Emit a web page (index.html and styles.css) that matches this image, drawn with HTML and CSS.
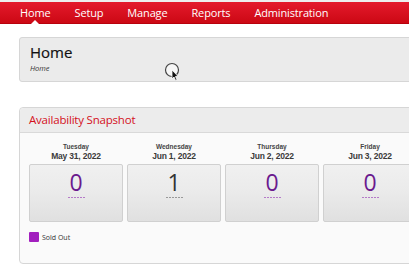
FILE: index.html
```html
<!DOCTYPE html>
<html>
<head>
<meta charset="utf-8">
<link rel="stylesheet" href="styles.css">
</head>
<body>
<div class="topline"></div>
<nav class="nav">
  <a class="nav-item active">Home</a>
  <a class="nav-item">Setup</a>
  <a class="nav-item">Manage</a>
  <a class="nav-item">Reports</a>
  <a class="nav-item">Administration</a>
</nav>
<main class="main">
  <section class="page-head">
    <h1 class="page-title">Home</h1>
    <div class="crumb">Home</div>
  </section>
  <section class="panel">
    <div class="panel-head">Availability Snapshot</div>
    <div class="panel-body">
      <div class="days">
        <div class="day">
          <div class="dow">Tuesday</div>
          <div class="date">May 31, 2022</div>
          <div class="card"><div class="num sold">0</div><div class="dash"></div></div>
        </div>
        <div class="day">
          <div class="dow">Wednesday</div>
          <div class="date">Jun 1, 2022</div>
          <div class="card"><div class="num">1</div><div class="dash gray"></div></div>
        </div>
        <div class="day">
          <div class="dow">Thursday</div>
          <div class="date">Jun 2, 2022</div>
          <div class="card"><div class="num sold">0</div><div class="dash"></div></div>
        </div>
        <div class="day">
          <div class="dow">Friday</div>
          <div class="date">Jun 3, 2022</div>
          <div class="card"><div class="num sold">0</div><div class="dash"></div></div>
        </div>
      </div>
      <div class="legend"><span class="swatch"></span><span class="legend-text">Sold Out</span></div>
    </div>
  </section>
</main>
<svg class="cursor" width="20" height="22" viewBox="0 0 20 22">
  <circle cx="8" cy="8" r="6.5" fill="rgba(255,255,255,0.6)" stroke="#444" stroke-width="1.2"/>
  <path d="M8 8 L8 17 L10 15 L11.6 18.5 L13 17.8 L11.5 14.5 L14 14.3 Z" fill="#111" stroke="#fff" stroke-width="0.8"/>
</svg>
</body>
</html>
```
FILE: styles.css
```css
html, body {
  margin: 0;
  padding: 0;
  background: #fff;
  overflow: hidden;
  width: 409px;
  height: 275px;
}
body {
  font-family: "Open Sans", "DejaVu Sans", sans-serif;
  color: #222;
  position: relative;
}
.topline {
  height: 2px;
  background: #eeeeee;
}
.nav {
  height: 21px;
  display: flex;
  padding-left: 8px;
  background: linear-gradient(#e41a2c, #cc0814);
  border-bottom: 1px solid #b8000c;
}
.nav-item {
  position: relative;
  color: #fff;
  font-size: 11px;
  letter-spacing: -0.15px;
  line-height: 21px;
  padding: 0 12px;
  white-space: nowrap;
}
.nav-item.active::after {
  content: "";
  position: absolute;
  left: 50%;
  bottom: -1px;
  margin-left: -4px;
  border-left: 4px solid transparent;
  border-right: 4px solid transparent;
  border-bottom: 4px solid #fff;
}
.main {
  padding: 13px 0 0 19px;
  width: 520px;
}
.page-head {
  height: 43px;
  background: #ebebeb;
  border: 1px solid #d6d6d6;
  border-radius: 3px;
  padding: 0 10px;
  box-sizing: content-box;
}
.page-title {
  margin: 0;
  padding-top: 4px;
  font-size: 15px;
  font-weight: 400;
  line-height: 20px;
  color: #111;
  -webkit-text-stroke: 0.2px #111;
}
.crumb {
  font-size: 7.5px;
  font-style: italic;
  color: #333;
  line-height: 10px;
  margin-top: 1px;
}
.panel {
  margin-top: 25px;
  border: 1px solid #d6d6d6;
  border-radius: 4px;
  background: #fafafa;
}
.panel-head {
  height: 24px;
  line-height: 24px;
  padding-left: 9px;
  background: #ececec;
  border-bottom: 1px solid #d9d9d9;
  color: #d4101c;
  font-size: 11.5px;
  letter-spacing: -0.2px;
  border-radius: 4px 4px 0 0;
}
.panel-body {
  padding: 9px 9px 21px 9px;
}
.days {
  display: flex;
  gap: 4px;
}
.day {
  width: 94px;
  flex: none;
  text-align: center;
}
.dow {
  font-family: "Liberation Sans", Arial, sans-serif;
  font-weight: 700;
  font-size: 6.5px;
  line-height: 9px;
  color: #444;
}
.date {
  font-family: "Liberation Sans", Arial, sans-serif;
  font-weight: 700;
  font-size: 8.5px;
  letter-spacing: -0.2px;
  line-height: 11px;
  color: #3a3a3a;
  margin-bottom: 2px;
}
.card {
  border: 1px solid #d0d0d0;
  border-radius: 2px;
  background: linear-gradient(#f0f0f0 0%, #ebebeb 45%, #e0e0e0 100%);
  padding-top: 4px;
  box-sizing: content-box;
  height: 52px;
}
.num {
  font-size: 23px;
  line-height: 26px;
  color: #333;
}
.num.sold {
  color: #6b1a8e;
}
.dash {
  width: 17px;
  height: 1px;
  margin: 2px auto 0;
  background: repeating-linear-gradient(90deg, #b57ac8 0 2px, transparent 2px 3px);
}
.dash.gray {
  background: repeating-linear-gradient(90deg, #999 0 2px, transparent 2px 3px);
}
.legend {
  display: flex;
  align-items: center;
  margin-top: 10px;
  height: 10px;
}
.swatch {
  width: 10px;
  height: 10px;
  background: #a21fbe;
  border-radius: 1px;
}
.legend-text {
  font-size: 7px;
  margin-left: 3px;
  color: #333;
}
.cursor {
  position: absolute;
  left: 164px;
  top: 62px;
}
```
